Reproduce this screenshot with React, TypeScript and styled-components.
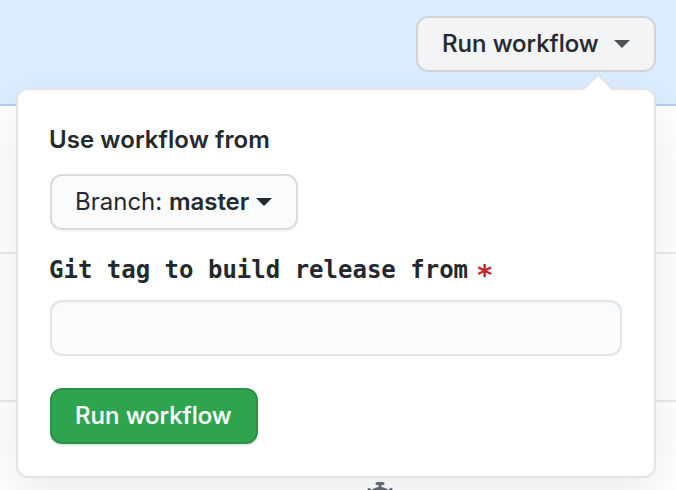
import React from "react";
import styled, { createGlobalStyle } from "styled-components";

const GlobalStyle = createGlobalStyle`
  *, *::before, *::after { box-sizing: border-box; }
  body {
    margin: 0;
    background: #fff;
    color: #24292e;
    font-family: Inter, "Liberation Sans", sans-serif;
    font-size: 24px;
    line-height: 36px;
    overflow: hidden;
  }
`;

const Page = styled.main`
  position: relative;
  width: 676px;
  height: 490px;
  overflow: hidden;
`;

const Banner = styled.header`
  display: flex;
  justify-content: flex-end;
  height: 106px;
  padding: 16px 20px 0 0;
  background: #dbedff;
  border-bottom: 2px solid #afcdec;
`;

const Row = styled.div`
  height: 148px;
  border-bottom: 2px solid #e5e8ec;
`;

const LastRow = styled.div`
  display: flex;
  justify-content: center;
  padding: 80px 0 0 84px;
  color: #586069;
`;

const Caret = styled.span<{ $gap: number; $color?: string }>`
  width: 0;
  height: 0;
  margin-left: ${(p) => p.$gap}px;
  border: 8px solid transparent;
  border-top-color: ${(p) => p.$color ?? "#24292e"};
  border-bottom: 0;
`;

const Button = styled.button<{ $tone?: "gray" | "primary"; $width: number }>`
  display: flex;
  align-items: center;
  width: ${(p) => p.$width}px;
  height: 56px;
  padding: 0 0 0 ${(p) => (p.$tone === "gray" ? 24 : 23)}px;
  border: 2px solid ${(p) => (p.$tone === "primary" ? "#2b9147" : p.$tone === "gray" ? "#d2d4d6" : "#dadbdd")};
  border-radius: 12px;
  background: ${(p) => (p.$tone === "primary" ? "#2ea44f" : p.$tone === "gray" ? "#f3f4f6" : "#fafbfc")};
  color: ${(p) => (p.$tone === "primary" ? "#fff" : "#24292e")};
  box-shadow: ${(p) => (p.$tone === "gray" ? "none" : p.$tone === "primary" ? "0 2px 0 rgba(27, 31, 35, 0.1)" : "0 2px 0 rgba(27, 31, 35, 0.04)")};
  font: inherit;
  white-space: nowrap;
`;

const Label = styled.span<{ $weight?: number; $spacing?: number }>`
  font-weight: ${(p) => p.$weight ?? 500};
  letter-spacing: ${(p) => p.$spacing ?? 0}px;
`;

const ActionLabel = styled(Label)`
  -webkit-text-stroke: 0.15px currentColor;
`;

const Popover = styled.section`
  position: absolute;
  top: 88px;
  left: 16px;
  width: 640px;
  height: 390px;
  padding: 32px;
  border: 2px solid #e1e4e8;
  border-radius: 12px;
  background: #fff;
  box-shadow: 0 16px 48px rgba(149, 157, 165, 0.2);

  &::before, &::after {
    content: "";
    position: absolute;
    border-style: solid;
    border-color: transparent;
    border-top-width: 0;
  }
  &::before {
    top: -16px;
    right: 40px;
    border-width: 0 16px 16px;
    border-bottom-color: #dce1e7;
  }
  &::after {
    top: -14px;
    right: 42px;
    border-width: 0 14px 14px;
    border-bottom-color: #fff;
  }
`;

const Heading = styled.div`
  height: 36px;
  margin: 0 0 16px -1px;
`;

const FieldLabel = styled.label`
  display: flex;
  height: 36px;
  margin: 22px 0 12px -1px;
  font-family: "DejaVu Sans Mono", monospace;
  font-weight: 700;
  white-space: nowrap;
`;

const Required = styled.span`
  margin-left: 8px;
  padding-top: 5px;
  color: #cb2431;
  font-size: 29px;
`;

const Input = styled.input`
  display: block;
  width: 572px;
  height: 56px;
  margin-bottom: 32px;
  padding: 0 24px;
  border: 2px solid #e1e4e8;
  border-radius: 12px;
  background: #fafbfc;
  box-shadow: inset 0 2px 0 rgba(225, 228, 232, 0.2);
  font: inherit;
  outline: none;
`;

const Stopwatch = () => (
  <svg width="32" height="32" viewBox="0 0 16 16" fill="currentColor" aria-hidden="true">
    <path
      fillRule="evenodd"
      d="M5.75.75A.75.75 0 016.5 0h3a.75.75 0 010 1.5h-.75v1l-.001.041a6.718 6.718 0 013.464 1.435l.007-.006.75-.75a.75.75 0 111.06 1.06l-.75.75-.006.007a6.75 6.75 0 11-10.548 0L2.72 5.03l-.75-.75a.75.75 0 011.06-1.06l.75.75.007.006A6.718 6.718 0 017.25 2.541a.756.756 0 010-.041v-1H6.5a.75.75 0 01-.75-.75zM8 14.5A5.25 5.25 0 108 4a5.25 5.25 0 000 10.5z"
    />
  </svg>
);

export default function App() {
  return (
    <>
      <GlobalStyle />
      <Page>
        <Banner>
          <Button $tone="gray" $width={240}>
            <ActionLabel $spacing={-0.04}>Run workflow</ActionLabel>
            <Caret $gap={15.5} $color="#4f5358" />
          </Button>
        </Banner>
        <Row />
        <Row />
        <LastRow>
          <Stopwatch />
        </LastRow>
        <Popover>
          <Heading>
            <Label $weight={600} $spacing={0.07}>Use workflow from</Label>
          </Heading>
          <Button $width={248}>
            <Label $weight={400}>Branch:&nbsp;</Label>
            <Label $weight={600} $spacing={-0.05}>master</Label>
            <Caret $gap={7} />
          </Button>
          <FieldLabel htmlFor="tag">
            Git tag to build release from<Required>*</Required>
          </FieldLabel>
          <Input id="tag" />
          <Button $tone="primary" $width={208}>
            <ActionLabel $spacing={-0.04}>Run workflow</ActionLabel>
          </Button>
        </Popover>
      </Page>
    </>
  );
}
